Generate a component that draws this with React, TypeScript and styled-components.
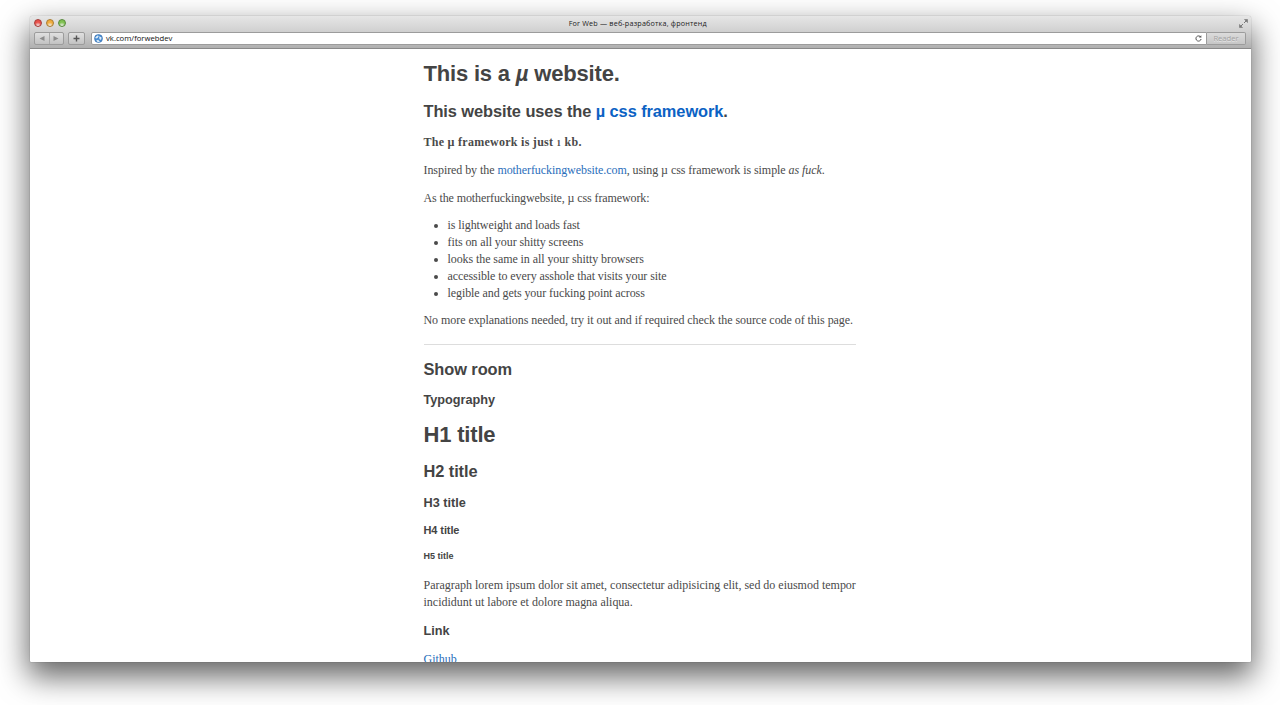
import React from 'react'
import styled, { createGlobalStyle } from 'styled-components'

const SERIF = "'Liberation Serif', serif"
const SANS = "'Liberation Sans', sans-serif"
const CHROME = "'Open Sans', 'Noto Sans', sans-serif"

const GlobalStyle = createGlobalStyle`
  * {
    box-sizing: border-box;
  }
  body {
    margin: 0;
    background: #fff;
    overflow: hidden;
  }
`

const Desktop = styled.div`
  height: 705px;
  padding: 16px 29.5px 43px;
  overflow: hidden;
`

const Window = styled.div`
  display: flex;
  flex-direction: column;
  height: 646px;
  border-radius: 3px 3px 1px 1px;
  background: #fff;
  box-shadow:
    0 0 1px rgba(0, 0, 0, 0.5),
    0 13px 30px 2px rgba(0, 0, 0, 0.6);
  overflow: hidden;
`

const Chrome = styled.div`
  flex: none;
  height: 33px;
  background: linear-gradient(#e6e6e6, #d2d2d2 45%, #b0b0b0);
  border-bottom: 1px solid #8a8a8a;
  border-radius: 3px 3px 0 0;
`

const TitleBar = styled.div`
  display: grid;
  grid-template-columns: 57px 1fr 63px;
  align-items: center;
  height: 14px;
  padding: 0 3px 0 4.5px;
`

const Lights = styled.div`
  display: flex;
  gap: 4px;
`

const Light = styled.span<{ $color: string; $edge: string }>`
  width: 8px;
  height: 8px;
  border-radius: 50%;
  border: 1px solid ${(props) => props.$edge};
  background: radial-gradient(circle at 50% 95%, #fffa, ${(props) => props.$color} 55%);
`

const Title = styled.div`
  font: 7.2px/14px ${CHROME};
  letter-spacing: 0.19px;
  color: #222;
  text-align: center;
  white-space: nowrap;
`

const Expand = styled.svg`
  justify-self: end;
`

const Toolbar = styled.div`
  display: flex;
  align-items: center;
  height: 16px;
  padding: 0 4.5px;
`

const ChromeButton = styled.div<{ $width: number; $gap: number }>`
  display: flex;
  align-items: center;
  justify-content: center;
  width: ${(props) => props.$width}px;
  height: 13px;
  margin-right: ${(props) => props.$gap}px;
  border: 1px solid #9c9c9c;
  border-radius: 2px;
  background: linear-gradient(#e0e0e0, #c2c2c2);
`

const AddressBar = styled.div`
  display: flex;
  flex: 1;
  align-items: center;
  height: 13px;
  padding: 0 3px 0 2px;
  border: 1px solid #9c9c9c;
  border-radius: 2px 0 0 2px;
  background: #fff;
`

const Url = styled.span`
  flex: 1;
  margin-left: 3px;
  font: 7.7px/11px ${CHROME};
  color: #111;
`

const Reader = styled.div`
  width: 39px;
  height: 13px;
  border: 1px solid #9c9c9c;
  border-left: 0;
  border-radius: 0 2px 2px 0;
  background: linear-gradient(#dcdcdc, #c6c6c6);
  font: 7.6px/11px ${CHROME};
  color: #a2a2a2;
  text-align: center;
  text-shadow: 0 1px 0 #e6e6e6;
`

const Viewport = styled.div`
  flex: 1;
  min-height: 0;
  overflow: hidden;
`

const Article = styled.main`
  display: flex;
  flex-direction: column;
  width: 432px;
  margin-left: 394px;
  padding-top: 11px;
  color: #444;
  white-space: nowrap;
`

const H1 = styled.h1`
  margin: 0 0 11.5px;
  font: bold 22px/28px ${SANS};
  letter-spacing: -0.18px;
`

const H2 = styled.h2`
  margin: 0 0 12.6px;
  font: bold 16.4px/22px ${SANS};
  letter-spacing: -0.08px;
`

const H3 = styled.h3`
  margin: 0 0 12.3px;
  font: bold 12.7px/16px ${SANS};
`

const H4 = styled.h4`
  margin: 0 0 13.5px;
  font: bold 11px/14px ${SANS};
  letter-spacing: -0.1px;
`

const H5 = styled.h5`
  margin: 0 0 14.4px;
  font: bold 9px/12px ${SANS};
`

const Paragraph = styled.p<{ $track?: number }>`
  margin: 0 0 11px;
  font: 12px/16.8px ${SERIF};
  letter-spacing: ${(props) => props.$track ?? 0}px;
  color: #4a4a4a;
`

const OldStyle = styled.span`
  font-size: 0.74em;
  line-height: 1;
`

const List = styled.ul`
  margin: 0 0 11px;
  padding-left: 24px;
  font: 12px/16.8px ${SERIF};
  letter-spacing: -0.08px;
  color: #4a4a4a;
`

const Link = styled.a`
  color: #0b62c4;
  text-decoration: none;
`

const TextLink = styled(Link)`
  color: #2a6ebb;
`

const Rule = styled.hr`
  width: 100%;
  height: 1px;
  margin: 3.4px 0 13px;
  border: 0;
  background: #ddd;
`

const Section = styled.section`
  margin-top: 1.2px;
`

const App = () => (
  <>
    <GlobalStyle />
    <Desktop>
      <Window>
        <Chrome>
          <TitleBar>
            <Lights>
              <Light $color="#e8504a" $edge="#a33a36" />
              <Light $color="#f0ac3c" $edge="#a87a2e" />
              <Light $color="#7fc151" $edge="#56893a" />
            </Lights>
            <Title>For Web — веб-разработка, фронтенд</Title>
            <Expand width="9" height="9" viewBox="0 0 9 9">
              <path d="M5.5 .5h3V3.5zM.5 5.5v3H3.5z" fill="#777" stroke="#777" strokeWidth=".6" />
              <path d="M5 4l2-2M4 5 2 7" stroke="#777" />
            </Expand>
          </TitleBar>
          <Toolbar>
            <ChromeButton $width={30} $gap={4}>
              <svg width="28" height="11" viewBox="0 0 28 11">
                <path d="M4.5 5.5 9.5 3v5zM23.5 5.5 18.5 3v5z" fill="#8c8c8c" />
                <path d="M14.5 0v11" stroke="#aaa" />
              </svg>
            </ChromeButton>
            <ChromeButton $width={17} $gap={6}>
              <svg width="7" height="7" viewBox="0 0 7 7">
                <path d="M3.5.5v6M.5 3.5h6" stroke="#555" strokeWidth="1.4" />
              </svg>
            </ChromeButton>
            <AddressBar>
              <svg width="9" height="9" viewBox="0 0 9 9">
                <circle cx="4.5" cy="4.5" r="4" fill="#4a8dd2" stroke="#3a70ad" strokeWidth=".6" />
                <path d="M1.2 3.4 3.4 1.4 4.8 2 3.6 4 2 4.6zM5.2 2.2 7.6 3.4 7 6 5.4 5zM2.2 6.4l2-.6L6 8H3.6z" fill="#dcecf8" />
              </svg>
              <Url>vk.com/forwebdev</Url>
              <svg width="9" height="9" viewBox="0 0 9 9">
                <path d="M6.8 3.2A2.6 2.6 0 1 0 7.1 5" fill="none" stroke="#555" />
                <path d="M4.9 3.4 7.3 3.6V1.2z" fill="#555" />
              </svg>
            </AddressBar>
            <Reader>Reader</Reader>
          </Toolbar>
        </Chrome>
        <Viewport>
          <Article>
            <H1>
              This is a <em>µ</em> website.
            </H1>
            <H2>
              This website uses the <Link href="#">µ css framework</Link>.
            </H2>
            <Paragraph $track={0.27}>
              <b>
                The µ framework is just <OldStyle>1</OldStyle> kb.
              </b>
            </Paragraph>
            <Paragraph $track={-0.07}>
              Inspired by the <TextLink href="#">motherfuckingwebsite.com</TextLink>, using µ css framework is simple{' '}
              <em>as fuck</em>.
            </Paragraph>
            <Paragraph $track={-0.11}>As the motherfuckingwebsite, µ css framework:</Paragraph>
            <List>
              <li>is lightweight and loads fast</li>
              <li>fits on all your shitty screens</li>
              <li>looks the same in all your shitty browsers</li>
              <li>accessible to every asshole that visits your site</li>
              <li>legible and gets your fucking point across</li>
            </List>
            <Paragraph $track={-0.055}>
              No more explanations needed, try it out and if required check the source code of this page.
            </Paragraph>
            <Rule />
            <H2>Show room</H2>
            <H3>Typography</H3>
            <H1>H1 title</H1>
            <H2>H2 title</H2>
            <H3>H3 title</H3>
            <H4>H4 title</H4>
            <H5>H5 title</H5>
            <Paragraph $track={-0.01}>
              Paragraph lorem ipsum dolor sit amet, consectetur adipisicing elit, sed do eiusmod tempor
              <br />
              incididunt ut labore et dolore magna aliqua.
            </Paragraph>
            <Section>
              <H3>Link</H3>
              <Paragraph>
                <TextLink href="#">Github</TextLink>
              </Paragraph>
            </Section>
          </Article>
        </Viewport>
      </Window>
    </Desktop>
  </>
)

export default App
